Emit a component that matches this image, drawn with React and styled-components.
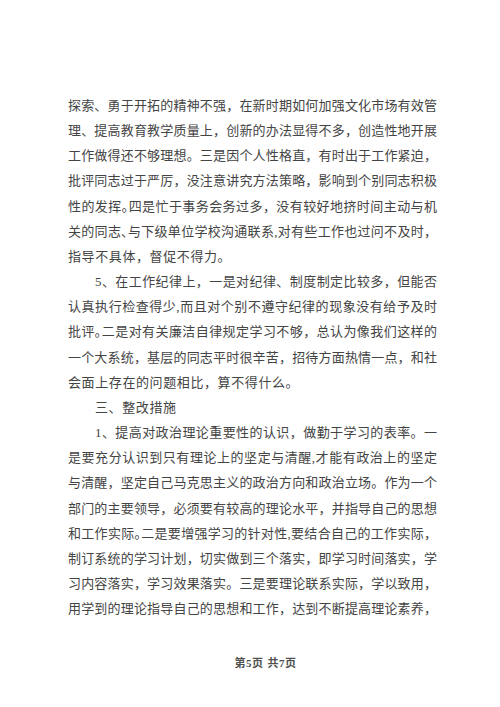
import React from 'react';
import styled, { createGlobalStyle } from 'styled-components';

const GlobalStyle = createGlobalStyle`
  html, body {
    margin: 0;
    padding: 0;
    background: #ffffff;
  }
`;

const paragraphs = [
  {
    indent: false,
    lines: [
      '探索、勇于开拓的精神不强，在新时期如何加强文化市场有效管',
      '理、提高教育教学质量上，创新的办法显得不多，创造性地开展',
      '工作做得还不够理想。三是因个人性格直，有时出于工作紧迫，',
      '批评同志过于严厉，没注意讲究方法策略，影响到个别同志积极',
      '性的发挥｡四是忙于事务会务过多，没有较好地挤时间主动与机',
      '关的同志､与下级单位学校沟通联系,对有些工作也过问不及时，',
      '指导不具体，督促不得力。',
    ],
  },
  {
    indent: true,
    lines: [
      '5、在工作纪律上，一是对纪律、制度制定比较多，但能否',
      '认真执行检查得少,而且对个别不遵守纪律的现象没有给予及时',
      '批评｡二是对有关廉洁自律规定学习不够，总认为像我们这样的',
      '一个大系统，基层的同志平时很辛苦，招待方面热情一点，和社',
      '会面上存在的问题相比，算不得什么。',
    ],
  },
  {
    indent: true,
    lines: ['三、整改措施'],
  },
  {
    indent: true,
    open: true,
    lines: [
      '1、提高对政治理论重要性的认识，做勤于学习的表率。一',
      '是要充分认识到只有理论上的坚定与清醒,才能有政治上的坚定',
      '与清醒，坚定自己马克思主义的政治方向和政治立场。作为一个',
      '部门的主要领导，必须要有较高的理论水平，并指导自己的思想',
      '和工作实际｡二是要增强学习的针对性,要结合自己的工作实际，',
      '制订系统的学习计划，切实做到三个落实，即学习时间落实，学',
      '习内容落实，学习效果落实。三是要理论联系实际，学以致用，',
      '用学到的理论指导自己的思想和工作，达到不断提高理论素养，',
    ],
  },
];

const Page = styled.div`
  width: 500px;
  height: 707px;
  box-sizing: border-box;
  padding: 93px 63px 0 68px;
  display: flex;
  flex-direction: column;
  background: #ffffff;
`;

const Body = styled.div`
  display: flex;
  flex-direction: column;
  font-family: "Liberation Serif", "Noto Sans CJK SC", serif;
  font-size: 13px;
  line-height: 25.15px;
  color: #444444;
`;

const Line = styled.div`
  white-space: nowrap;
  padding-left: ${p => (p.$indent ? '27px' : '0')};
  text-align: ${p => (p.$last ? 'left' : 'justify')};
  text-align-last: ${p => (p.$last ? 'left' : 'justify')};
  letter-spacing: ${p => (p.$last ? '0.6px' : '0')};
`;

const Footer = styled.div`
  margin-top: 33px;
  display: flex;
  justify-content: center;
  gap: 4px;
  padding-left: 26px;
  font-family: "Liberation Serif", "Noto Sans CJK SC", serif;
  font-size: 11px;
  font-weight: bold;
  color: #505050;
  letter-spacing: 0.5px;
`;

function Paragraph({ para }) {
  return para.lines.map((text, i) => {
    const isLast = i === para.lines.length - 1 && !para.open;
    return (
      <Line key={i} $indent={para.indent && i === 0} $last={isLast}>
        {text}
      </Line>
    );
  });
}

export default function App() {
  return (
    <>
      <GlobalStyle />
      <Page>
        <Body>
          {paragraphs.map((para, i) => (
            <Paragraph key={i} para={para} />
          ))}
        </Body>
        <Footer>
          <span>第5页</span>
          <span>共7页</span>
        </Footer>
      </Page>
    </>
  );
}
